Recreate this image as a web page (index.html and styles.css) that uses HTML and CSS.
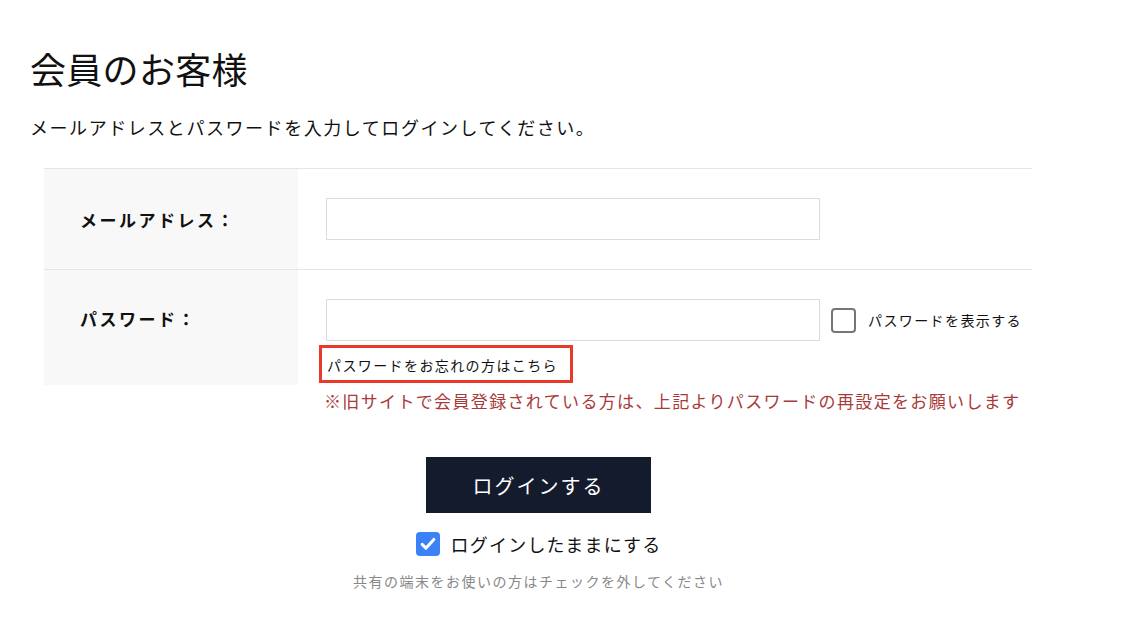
FILE: index.html
```html
<!DOCTYPE html>
<html lang="ja">
<head>
  <meta charset="UTF-8" />
  <meta name="viewport" content="width=device-width, initial-scale=1.0" />
  <title>会員のお客様</title>
  <link rel="stylesheet" href="styles.css">
</head>
<body>

  <main class="login">
    <h1>会員のお客様</h1>
    <p class="lead">メールアドレスとパスワードを入力してログインしてください。</p>

    <div class="form-table">
      <div class="form-row">
        <div class="form-label">メールアドレス：</div>
        <div class="form-field">
          <input type="email" class="text-input">
        </div>
      </div>
      <div class="form-row">
        <div class="form-label">パスワード：</div>
        <div class="form-field">
          <div class="pw-line">
            <input type="password" class="text-input">
            <label class="show-pw">
              <span class="box"></span>
              パスワードを表示する
            </label>
          </div>
          <a href="#" class="forgot">パスワードをお忘れの方はこちら</a>
        </div>
      </div>
    </div>

    <p class="notice">※旧サイトで会員登録されている方は、上記よりパスワードの再設定をお願いします</p>

    <div class="actions">
      <button class="login-button">ログインする</button>
      <label class="keep">
        <span class="box checked">
          <svg viewBox="0 0 24 24" width="20" height="20"><path d="M5 12.5l4.5 4.5L19 6.5" fill="none" stroke="#fff" stroke-width="3.6" stroke-linecap="round" stroke-linejoin="round"/></svg>
        </span>
        ログインしたままにする
      </label>
      <p class="hint">共有の端末をお使いの方はチェックを外してください</p>
    </div>
  </main>

</body>
</html>
```

FILE: styles.css
```css
body {
  margin: 0;
  font-family: "Noto Sans CJK JP", "Noto Sans", sans-serif;
  color: #111;
  background: #fff;
}
.login {
  padding: 38px 30px 0 30px;
}
h1 {
  margin: 0;
  font-size: 36px;
  font-weight: 400;
  line-height: 60px;
  letter-spacing: 0.3px;
}
.lead {
  margin: 14px 0 0 0;
  font-size: 18px;
  letter-spacing: 1.55px;
  line-height: 30px;
}
.form-table {
  margin: 26px 0 0 14px;
  width: 988px;
  border-top: 1px solid #e5e5e5;
}
.form-row {
  display: flex;
}
.form-row + .form-row {
  border-top: 1px solid #e5e5e5;
}
.form-label {
  width: 254px;
  flex-shrink: 0;
  background: #f8f8f8;
  box-sizing: border-box;
  padding-left: 36px;
  font-size: 17px;
  font-weight: 700;
  letter-spacing: 2.5px;
  display: flex;
  align-items: center;
}
.form-row:last-child .form-label {
  align-items: flex-start;
  padding-top: 36px;
}
.form-field {
  padding: 29px 0 2px 28px;
}
.form-row:first-child .form-field {
  padding-bottom: 29px;
}
.text-input {
  display: block;
  width: 494px;
  height: 42px;
  box-sizing: border-box;
  border: 1px solid #dcdcdc;
  border-radius: 0;
  margin: 0;
  outline: none;
}
.pw-line {
  display: flex;
  align-items: center;
}
.show-pw {
  display: flex;
  align-items: center;
  margin-left: 11px;
  font-size: 14px;
  letter-spacing: 1.4px;
}
.box {
  display: inline-block;
  width: 25px;
  height: 25px;
  box-sizing: border-box;
  border: 2px solid #767676;
  border-radius: 4px;
  margin-right: 12px;
}
.box.checked {
  width: 24px;
  height: 24px;
  border: none;
  background: #3b82f6;
  display: inline-flex;
  align-items: center;
  justify-content: center;
  margin-right: 11px;
}
.forgot {
  display: inline-block;
  margin: 4px 0 0 -7px;
  padding: 5px 12px 3px 5px;
  border: 3px solid #e8392a;
  font-size: 14px;
  letter-spacing: 1.4px;
  color: #111;
  text-decoration: none;
  line-height: 24px;
}
.notice {
  margin: 1px 0 0 294px;
  color: #a83a3a;
  font-size: 17px;
  letter-spacing: 1.35px;
  line-height: 30px;
}
.actions {
  display: flex;
  flex-direction: column;
  align-items: center;
  margin-top: 41px;
  width: 1017px;
}
.login-button {
  width: 225px;
  height: 56px;
  background: #131b2c;
  color: #fff;
  border: none;
  font-family: inherit;
  font-size: 20px;
  letter-spacing: 2px;
  cursor: pointer;
}
.keep {
  display: flex;
  align-items: center;
  margin-top: 18px;
  font-size: 18px;
  letter-spacing: 1.2px;
}
.hint {
  margin: 14px 0 0 0;
  font-size: 14px;
  letter-spacing: 1.5px;
  color: #888;
}
```
